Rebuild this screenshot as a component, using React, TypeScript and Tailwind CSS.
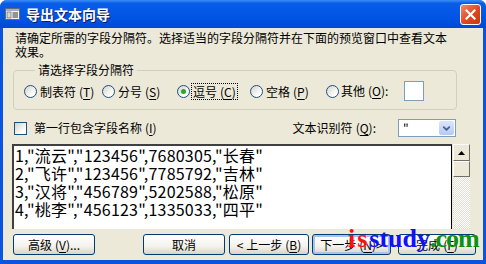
import { ChevronDown } from "lucide-react";

const lines = [
  '1,"流云","123456",7680305,"长春"',
  '2,"飞许","123456",7785792,"吉林"',
  '3,"汉将","456789",5202588,"松原"',
  '4,"桃李","456123",1335033,"四平"',
];

function Key({ k }: { k: string }) {
  return (
    <span className="ml-[3px]">
      (<span className="underline underline-offset-2">{k}</span>)
    </span>
  );
}

function Radio({ checked }: { checked?: boolean }) {
  return (
    <span className="flex h-[13px] w-[13px] shrink-0 items-center justify-center rounded-full border border-[#1c5180] bg-[linear-gradient(135deg,#d4d2c8,#ffffff_75%)]">
      {checked && <span className="h-[5px] w-[5px] rounded-full bg-[#2aa82a]" />}
    </span>
  );
}

function Option({
  label,
  k,
  width,
  checked,
  focused,
}: {
  label: string;
  k: string;
  width: string;
  checked?: boolean;
  focused?: boolean;
}) {
  return (
    <div className={`flex shrink-0 items-center ${width}`}>
      <Radio checked={checked} />
      <span
        className={`ml-[2px] px-[1px] leading-[15px] ${
          focused ? "outline outline-1 outline-dotted outline-black" : ""
        }`}
      >
        {label}
        <Key k={k} />
      </span>
    </div>
  );
}

function XpButton({
  children,
  className = "",
  isDefault,
}: {
  children: React.ReactNode;
  className?: string;
  isDefault?: boolean;
}) {
  return (
    <button
      className={`flex h-[21px] shrink-0 items-center justify-center rounded-[3px] border border-[#003c74] bg-[linear-gradient(180deg,#ffffff,#f3f2ec_60%,#d8d4c6)] text-[12px] text-black ${
        isDefault ? "shadow-[inset_0_0_0_2px_#a9c2ee]" : ""
      } ${className}`}
    >
      {children}
    </button>
  );
}

export default function App() {
  return (
    <div className="flex h-[264px] w-[486px] flex-col overflow-hidden rounded-t-[7px] bg-[#0a54e0] font-['Noto_Sans_CJK_SC',sans-serif] text-[12px] text-black">
      {/* title bar */}
      <div className="flex h-[28px] shrink-0 items-center bg-[linear-gradient(180deg,#3d8ef8_0%,#0a5de8_12%,#0055e5_60%,#0048d6_100%)] pl-[5px] pr-[5px]">
        <svg width="15" height="12" viewBox="0 0 15 12" className="shrink-0">
          <rect x="0.5" y="0.5" width="14" height="11" fill="#f4f4f4" stroke="#6a6a6a" />
          <rect x="1" y="1" width="13" height="2" fill="#9bb0d8" />
          <rect x="2" y="4" width="4" height="6" fill="#d8d8d8" stroke="#555" strokeWidth="0.6" />
          <line x1="7.5" y1="5" x2="13" y2="5" stroke="#333" />
          <line x1="7.5" y1="7" x2="13" y2="7" stroke="#333" />
          <line x1="7.5" y1="9" x2="13" y2="9" stroke="#333" />
        </svg>
        <span className="ml-[6px] text-[14px] font-bold leading-none text-white [text-shadow:1px_1px_0_#0a1e6a]">
          导出文本向导
        </span>
        <div className="ml-auto mt-[1px] flex h-[21px] w-[21px] items-center justify-center rounded-[3px] border border-white bg-[linear-gradient(135deg,#f08a68,#e0461f_55%,#c5380f)]">
          <svg width="11" height="11" viewBox="0 0 11 11">
            <path d="M1.5 1.5 L9.5 9.5 M9.5 1.5 L1.5 9.5" stroke="white" strokeWidth="2.2" strokeLinecap="square" />
          </svg>
        </div>
      </div>

      {/* body */}
      <div className="relative mx-[3px] mb-[4px] flex flex-1 flex-col bg-[#ece9d8] pl-[9px] pr-[13px]">
        <p className="ml-[3px] mt-[3px] leading-[14px]">
          请确定所需的字段分隔符。选择适当的字段分隔符并在下面的预览窗口中查看文本
          <br />
          效果。
        </p>

        <fieldset className="ml-[1px] mr-[13px] mt-[4px] rounded-[4px] border border-[#d0d0bf] pb-[10px] pl-[10px] pt-[6px]">
          <legend className="ml-[11px] px-[3px] leading-[14px]">请选择字段分隔符</legend>
          <div className="flex h-[16px] items-center">
            <Option label="制表符" k="T" width="w-[78px]" />
            <Option label="分号" k="S" width="w-[75px]" />
            <Option label="逗号" k="C" width="w-[73px]" checked focused />
            <Option label="空格" k="P" width="w-[76px]" />
            <div className="flex items-center">
              <Radio />
              <span className="ml-[2px]">
                其他
                <Key k="O" />:
              </span>
              <div className="ml-[16px] h-[20px] w-[20px] border border-[#7f9db9] bg-white" />
            </div>
          </div>
        </fieldset>

        <div className="mt-[9px] flex h-[18px] items-center">
          <span className="ml-[2px] h-[13px] w-[13px] border border-[#1c5180] bg-[linear-gradient(135deg,#d4d2c8,#ffffff_75%)]" />
          <span className="ml-[7px]">
            第一行包含字段名称
            <Key k="I" />
          </span>
          <span className="ml-auto">
            文本识别符
            <Key k="Q" />:
          </span>
          <div className="ml-[22px] mr-[14px] flex h-[18px] w-[58px] items-center border border-[#7f9db9] bg-white">
            <span className="ml-[4px] text-[12px] leading-none">"</span>
            <span className="ml-auto mr-[1px] flex h-[14px] w-[15px] items-center justify-center rounded-[2px] bg-[linear-gradient(180deg,#dbe6fd,#b5c9f5)]">
              <ChevronDown size={11} strokeWidth={4} color="#4d6185" />
            </span>
          </div>
        </div>

        <div className="mt-[7px] flex h-[85px]">
          <div className="flex-1 overflow-hidden border-l-2 border-r border-t-2 border-l-[#404040] border-r-black border-t-[#404040] bg-white pl-[1px] text-[16px] leading-[18px] tracking-[0.2px]">
            {lines.map((l) => (
              <div key={l} className="whitespace-nowrap">
                {l}
              </div>
            ))}
          </div>
          <div className="ml-[1px] flex w-[17px] flex-col bg-[repeating-conic-gradient(#ffffff_0_25%,#e2dfd2_0_50%)] bg-[length:2px_2px]">
            <div className="flex h-[17px] items-center justify-center border border-b-[#716f64] border-l-white border-r-[#716f64] border-t-white bg-[#ece9d8]">
              <svg width="7" height="4" viewBox="0 0 7 4">
                <path d="M3.5 0 L7 4 L0 4 Z" fill="black" />
              </svg>
            </div>
            <div className="h-[16px] border border-b-[#716f64] border-l-white border-r-[#716f64] border-t-white bg-[#ece9d8]" />
          </div>
        </div>

        <div className="mt-[5px] flex">
          <XpButton className="ml-[1px] w-[82px]">
            高级
            <Key k="V" />
            ...
          </XpButton>
          <XpButton className="ml-[48px] w-[82px]">取消</XpButton>
          <XpButton className="ml-[4px] w-[80px]">
            &lt; 上一步
            <Key k="B" />
          </XpButton>
          <XpButton className="ml-[3px] w-[79px]" isDefault>
            下一步
            <Key k="N" /> &gt;
          </XpButton>
          <XpButton className="ml-[7px] w-[78px]">
            完成
            <Key k="F" />
          </XpButton>
        </div>

        {/* watermark */}
        <div className="pointer-events-none absolute left-[345px] top-[198px] whitespace-nowrap font-['Liberation_Serif',serif] text-[26px] font-bold leading-none">
          <span className="tracking-[2px] text-[#ff1010]">is</span>
          <span className="text-[#1010ff]">study</span>
          <span className="tracking-[-1px] text-[#109010]">.com</span>
        </div>
      </div>
    </div>
  );
}
